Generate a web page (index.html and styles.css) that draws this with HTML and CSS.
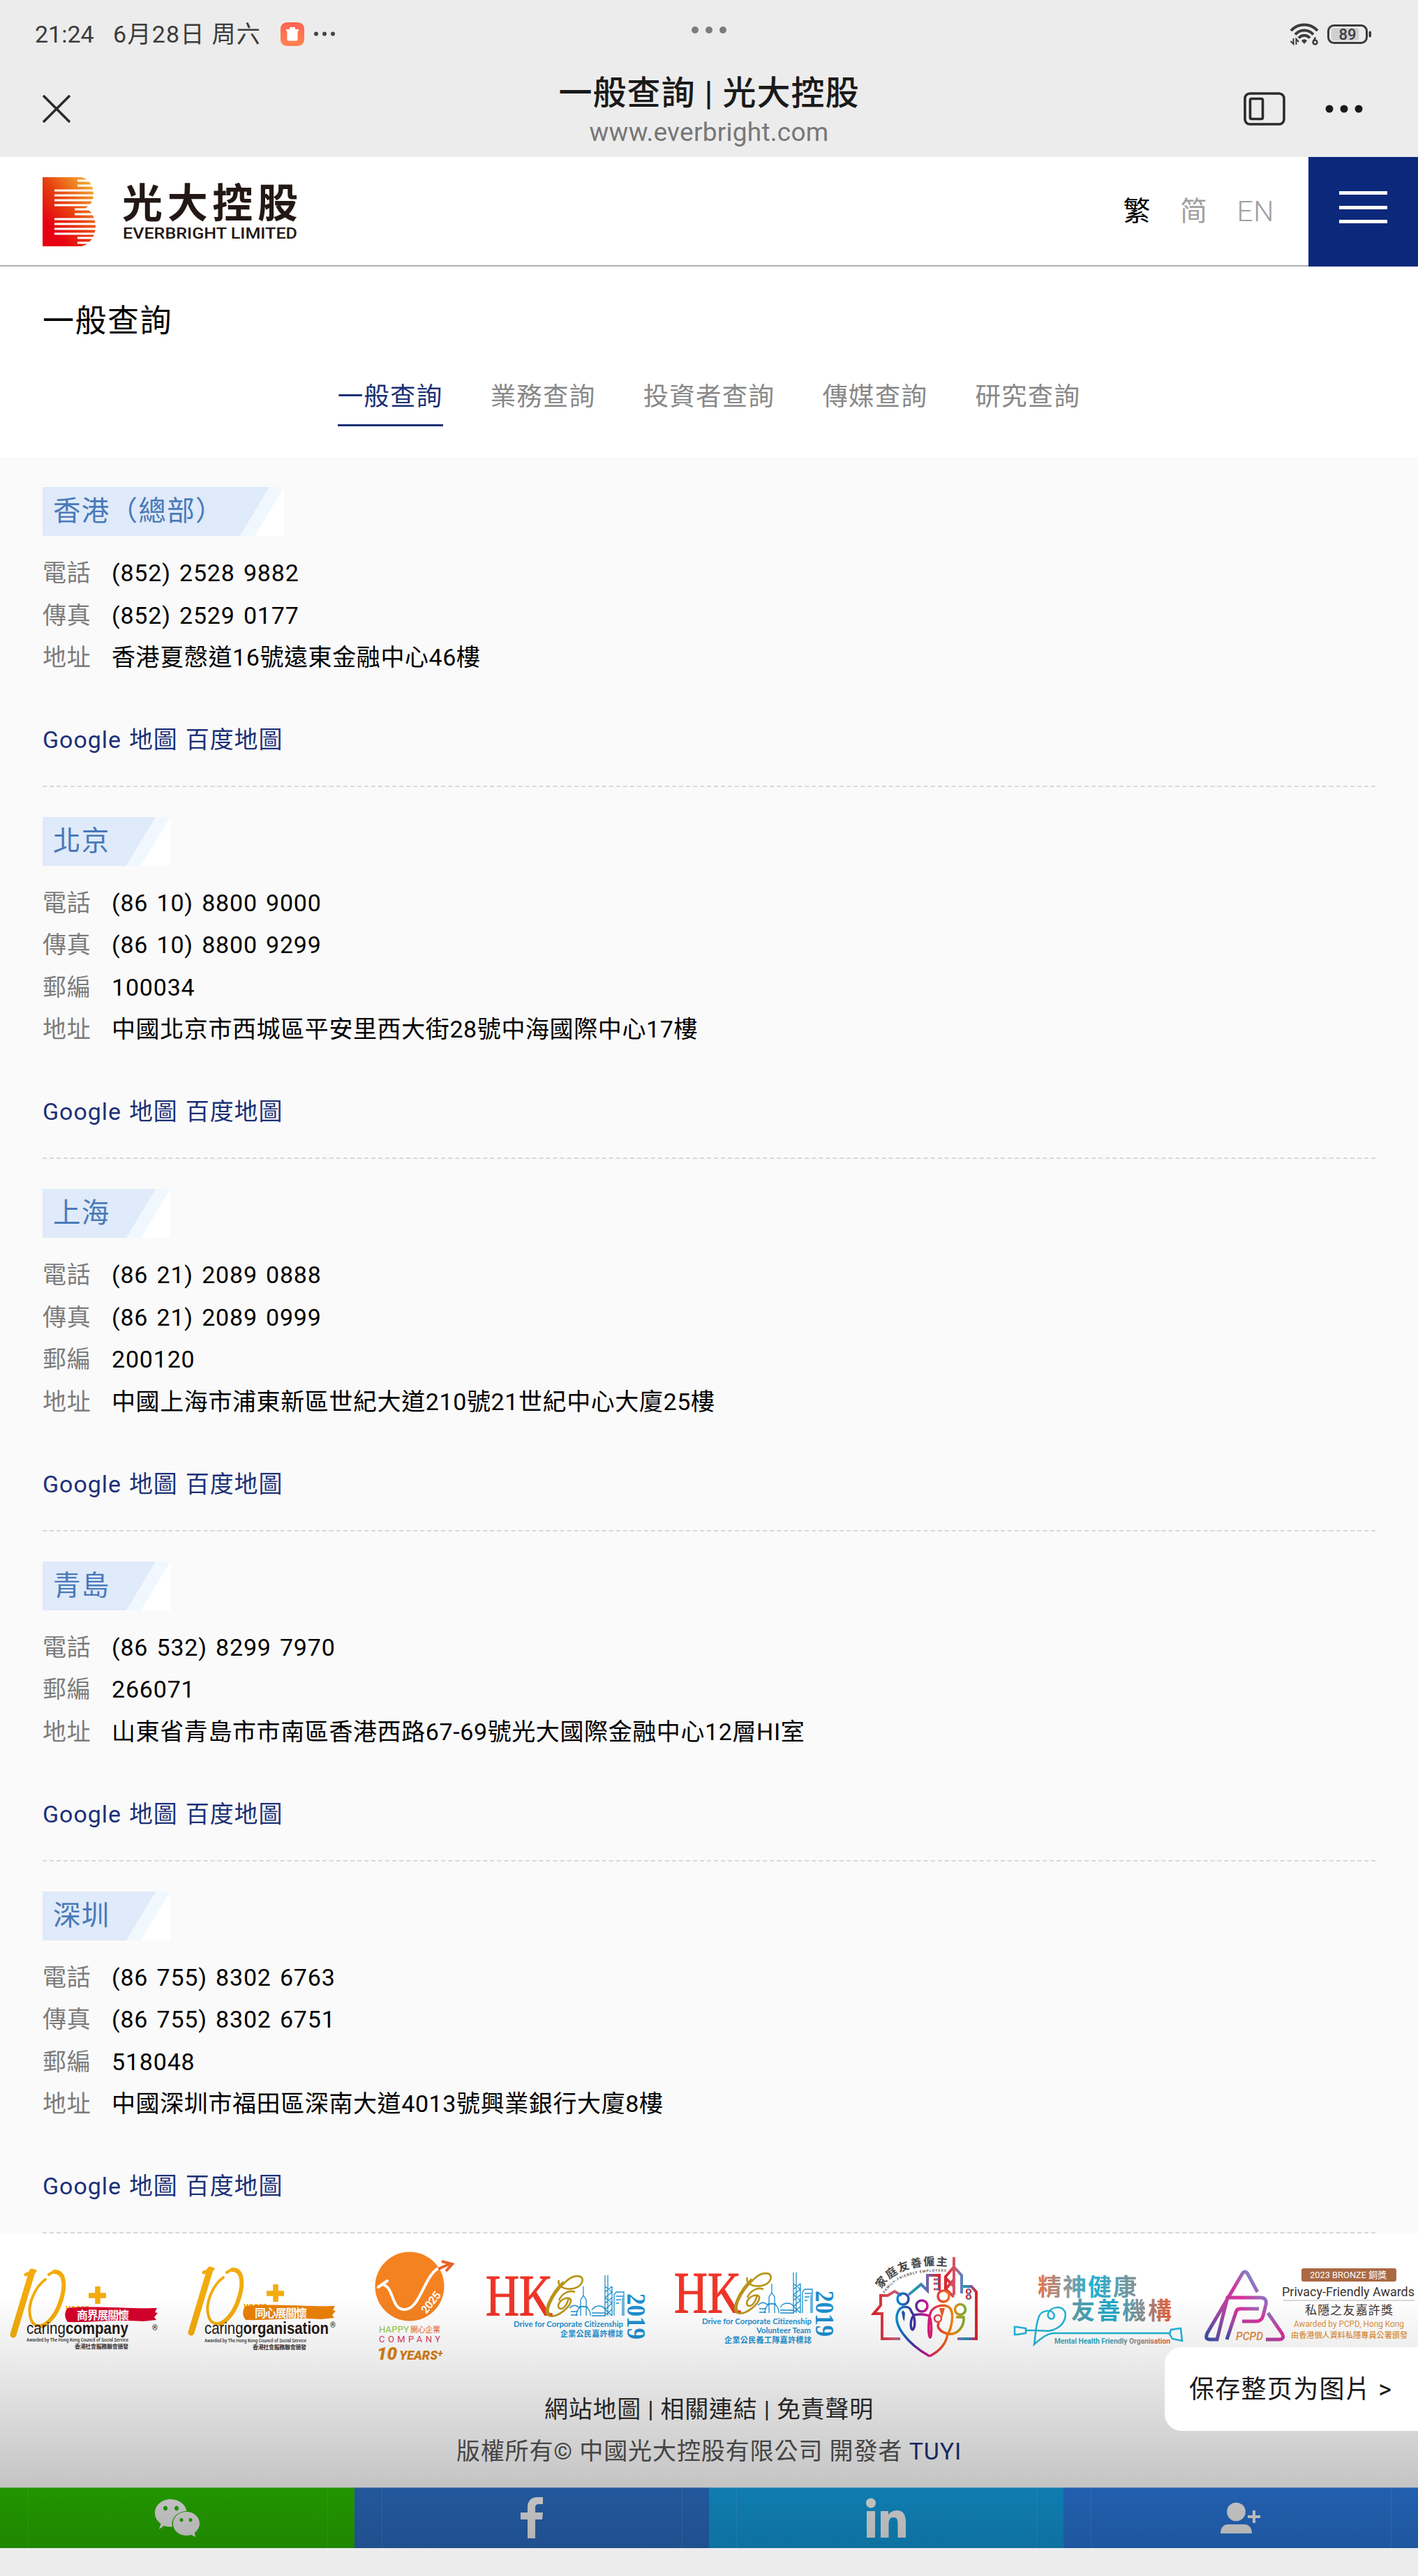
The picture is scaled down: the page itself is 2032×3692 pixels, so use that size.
FILE: index.html
```html
<!DOCTYPE html>
<html lang="zh-Hant">

<head>
    <meta charset="UTF-8" />
    <meta name="viewport" content="width=device-width, initial-scale=1.0" />
    <title>一般查詢 | 光大控股</title>
    <link rel="stylesheet" href="styles.css">
</head>

<body>
    <!-- device status bar -->
    <div class="status-bar">
        <div class="status-left">
            <span class="time">21:24</span>
            <span class="date">6月28日 周六</span>
            <svg class="app-icon" width="34" height="34" viewBox="0 0 34 34">
                <defs>
                    <linearGradient id="app" x1="0" y1="0" x2="0" y2="1">
                        <stop offset="0" stop-color="#ff6352" />
                        <stop offset="1" stop-color="#ff8450" />
                    </linearGradient>
                </defs>
                <rect width="34" height="34" rx="9" fill="url(#app)" />
                <path d="M13 7h8v3h5v2.500h-1.500V24a2.500 2.500 0 0 1-2.500 2.500H12A2.500 2.500 0 0 1 9.500 24V12.500H8V10h5z" fill="#fff" />
            </svg>
            <svg width="32" height="34" viewBox="0 0 32 34" fill="#444">
                <circle cx="4" cy="16.500" r="3" />
                <circle cx="16" cy="16.500" r="3" />
                <circle cx="28" cy="16.500" r="3" />
            </svg>
        </div>
        <svg class="status-dots" width="52" height="12" viewBox="0 0 52 12" fill="#7c7c7c">
            <circle cx="6" cy="6" r="5" />
            <circle cx="26" cy="6" r="5" />
            <circle cx="46" cy="6" r="5" />
        </svg>
        <div class="status-right">
            <svg width="42" height="34" viewBox="0 0 42 34" fill="none" stroke="#3c3c3c" stroke-width="4">
                <path d="M2 12C12 .500 30 .500 40 12" />
                <path d="M8 17.500C15 9.500 27 9.500 34 17.500" />
                <path d="M13 22.500C17.500 17.500 24.500 17.500 29 22.500" />
                <path d="M21 31l-4-4.500c2-3 6-3 8 0z" fill="#3c3c3c" stroke="none" />
                <path d="M5.500 23v8l-4-4M9.500 32v-8l3.500 4" stroke-width="2" />
                <circle cx="36.500" cy="28.500" r="3" stroke-width="2.500" />
                <path d="M34 27.500l3-6" stroke-width="2.500" />
            </svg>
            <svg width="64" height="30" viewBox="0 0 64 30">
                <rect x="1.500" y="2.500" width="55" height="25" rx="8" fill="none" stroke="#3c3c3c" stroke-width="3" />
                <rect x="5.500" y="6" width="40" height="18" rx="4" fill="#cfcfcf" />
                <rect x="59.500" y="10.500" width="3.500" height="9" rx="1.700" fill="#3c3c3c" />
                <text x="29" y="23" class="battery-text" text-anchor="middle">89</text>
            </svg>
        </div>
    </div>

    <!-- browser title bar -->
    <div class="nav-bar">
        <svg class="close" width="40" height="40" viewBox="0 0 40 40" stroke="#2b2b2b" stroke-width="3.600">
            <path d="M1 1l38 38M39 1L1 39" />
        </svg>
        <div class="page-name">
            <div class="page-title">一般查詢 | 光大控股</div>
            <div class="page-url">www.everbright.com</div>
        </div>
        <div class="nav-actions">
            <svg width="60" height="48" viewBox="0 0 60 48" fill="none" stroke="#2b2b2b">
                <rect x="2" y="2" width="56" height="44" rx="7" stroke-width="3.600" />
                <rect x="9.500" y="9.500" width="18" height="29" rx="2" stroke-width="3.600" />
            </svg>
            <svg width="54" height="12" viewBox="0 0 54 12" fill="#1a1a1a">
                <circle cx="6" cy="6" r="5.500" />
                <circle cx="27" cy="6" r="5.500" />
                <circle cx="48" cy="6" r="5.500" />
            </svg>
        </div>
    </div>

    <header>
        <svg class="logo" width="370" height="100" viewBox="0 0 370 100">
            <defs>
                <linearGradient id="flame" x1="0.150" y1="0.750" x2="0.850" y2="0">
                    <stop offset="0" stop-color="#e60012" />
                    <stop offset="0.450" stop-color="#e6420f" />
                    <stop offset="1" stop-color="#f6b130" />
                </linearGradient>
            </defs>
            <path d="M0 0H56C68 3 73 14 73 24C73 33 69 40 62 44C71 49 76 60 76 70C76 84 68 96 56 99H0Z" fill="url(#flame)" />
            <path d="M50 5H76M50 12H76M17 19H76M17 26H76M17 33H76M17 40H76M46 46H76M46 53H76M17 60H76M17 67H76M17 74H76M17 81H76M50 87H76M50 94H76" stroke="#fff" stroke-width="2.900" />
            <text x="114" y="58" class="logo-cn" textLength="252" lengthAdjust="spacing">光大控股</text>
            <text x="115" y="88" class="logo-en" textLength="250" lengthAdjust="spacingAndGlyphs">EVERBRIGHT LIMITED</text>
        </svg>
        <div class="header-right">
            <nav class="lang">
                <a class="current">繁</a>
                <a>简</a>
                <a class="en">EN</a>
            </nav>
            <div class="menu">
                <span></span>
                <span></span>
                <span></span>
            </div>
        </div>
    </header>

    <section class="intro">
        <h1>一般查詢</h1>
        <nav class="tabs">
            <a class="active">一般查詢</a>
            <a>業務查詢</a>
            <a>投資者查詢</a>
            <a>傳媒查詢</a>
            <a>研究查詢</a>
        </nav>
    </section>

    <main>
        <section class="office">
            <h2>香港（總部）</h2>
            <dl>
                <dt>電話</dt><dd class="num">(852) 2528 9882</dd>
                <dt>傳真</dt><dd class="num">(852) 2529 0177</dd>
                <dt>地址</dt><dd>香港夏慤道16號遠東金融中心46樓</dd>
            </dl>
            <p class="maps"><a>Google 地圖</a> <a>百度地圖</a></p>
        </section>
        <section class="office">
            <h2>北京</h2>
            <dl>
                <dt>電話</dt><dd class="num">(86 10) 8800 9000</dd>
                <dt>傳真</dt><dd class="num">(86 10) 8800 9299</dd>
                <dt>郵編</dt><dd class="num">100034</dd>
                <dt>地址</dt><dd>中國北京市西城區平安里西大街28號中海國際中心17樓</dd>
            </dl>
            <p class="maps"><a>Google 地圖</a> <a>百度地圖</a></p>
        </section>
        <section class="office">
            <h2>上海</h2>
            <dl>
                <dt>電話</dt><dd class="num">(86 21) 2089 0888</dd>
                <dt>傳真</dt><dd class="num">(86 21) 2089 0999</dd>
                <dt>郵編</dt><dd class="num">200120</dd>
                <dt>地址</dt><dd>中國上海市浦東新區世紀大道210號21世紀中心大廈25樓</dd>
            </dl>
            <p class="maps"><a>Google 地圖</a> <a>百度地圖</a></p>
        </section>
        <section class="office">
            <h2>青島</h2>
            <dl>
                <dt>電話</dt><dd class="num">(86 532) 8299 7970</dd>
                <dt>郵編</dt><dd class="num">266071</dd>
                <dt>地址</dt><dd>山東省青島市市南區香港西路67-69號光大國際金融中心12層HI室</dd>
            </dl>
            <p class="maps"><a>Google 地圖</a> <a>百度地圖</a></p>
        </section>
        <section class="office">
            <h2>深圳</h2>
            <dl>
                <dt>電話</dt><dd class="num">(86 755) 8302 6763</dd>
                <dt>傳真</dt><dd class="num">(86 755) 8302 6751</dd>
                <dt>郵編</dt><dd class="num">518048</dd>
                <dt>地址</dt><dd>中國深圳市福田區深南大道4013號興業銀行大廈8樓</dd>
            </dl>
            <p class="maps"><a>Google 地圖</a> <a>百度地圖</a></p>
        </section>
    </main>

    <footer>
        <div class="awards">
            <!-- caring company -->
            <svg width="255" height="190" viewBox="0 0 255 190">
                <g fill="none" stroke="#f3ab0d" stroke-linecap="round">
                    <path d="M46 55L19 145" stroke-width="9" />
                    <path d="M37 59l13-5" stroke-width="5" />
                    <path d="M70 59C90 45 96 66 87 97C78 130 50 143 44 122C38 103 50 77 65 66" stroke-width="4" />
                    <path d="M78 55C94 55 94 78 86 100C80 118 68 130 60 133" stroke-width="6" />
                </g>
                <path d="M140 76v25M127 89h25" stroke="#f3ab0d" stroke-width="7.500" />
                <text x="94" y="113" class="years" textLength="34" lengthAdjust="spacingAndGlyphs">years</text>
                <path d="M97 107C130 103 180 108 225 107L222 113L226 114L221 120L224 124L205 126C160 123 130 128 97 127C92 121 92 112 97 107Z" fill="#d5002c" />
                <text x="110" y="123" class="brush-text" textLength="75">商界展關懷</text>
                <text x="218" y="139" font-size="10" class="sans">®</text>
                <text x="38" y="144" class="caring" textLength="146" lengthAdjust="spacingAndGlyphs">caring<tspan font-weight="700">company</tspan></text>
                <text x="38" y="155" class="council" textLength="146" lengthAdjust="spacingAndGlyphs">Awarded by The Hong Kong Council of Social Service</text>
                <text x="107" y="165" class="council-cn" textLength="77">香港社會服務聯會頒發</text>
            </svg>
            <!-- caring organisation -->
            <svg width="255" height="190" viewBox="0 3 255 190">
                <g fill="none" stroke="#f3ab0d" stroke-linecap="round">
                    <path d="M46 55L19 145" stroke-width="9" />
                    <path d="M37 59l13-5" stroke-width="5" />
                    <path d="M70 59C90 45 96 66 87 97C78 130 50 143 44 122C38 103 50 77 65 66" stroke-width="4" />
                    <path d="M78 55C94 55 94 78 86 100C80 118 68 130 60 133" stroke-width="6" />
                </g>
                <path d="M140 76v25M127 89h25" stroke="#f3ab0d" stroke-width="7.500" />
                <text x="94" y="113" class="years" textLength="34" lengthAdjust="spacingAndGlyphs">years</text>
                <path d="M97 107C130 103 180 108 225 107L222 113L226 114L221 120L224 124L205 126C160 123 130 128 97 127C92 121 92 112 97 107Z" fill="#ea8006" />
                <text x="110" y="123" class="brush-text" textLength="75">同心展關懷</text>
                <text x="218" y="138" font-size="10" class="sans">®</text>
                <text x="38" y="147" class="caring" textLength="178" lengthAdjust="spacingAndGlyphs">caring<tspan font-weight="700">organisation</tspan></text>
                <text x="38" y="159" class="council" textLength="146" lengthAdjust="spacingAndGlyphs">Awarded by The Hong Kong Council of Social Service</text>
                <text x="107" y="169" class="council-cn" textLength="77">香港社會服務聯會頒發</text>
            </svg>
            <!-- happy company -->
            <svg width="170" height="190" viewBox="0 0 170 190">
                <circle cx="77" cy="76" r="49.500" fill="#f58220" />
                <path d="M32 77L45 68M38 73C55 77 50 107 68 109C92 111 96 63 118 50" fill="none" stroke="#fff" stroke-width="4" stroke-linecap="round" />
                <path d="M118 51L136 43M123 40L138 44L129 54" fill="none" stroke="#e8622a" stroke-width="4" />
                <text x="101" y="116" class="happy-year" transform="rotate(-52 101 116)" textLength="35">2025</text>
                <text x="33" y="142" class="happy" fill="#8dc63f" textLength="43">HAPPY</text>
                <text x="78" y="142" class="happy-cn" textLength="43">開心企業</text>
                <text x="33" y="156" class="happy" fill="#d83a5c" textLength="88">COMPANY</text>
                <text x="30" y="181" class="happy-ten" fill="#d97f14"><tspan font-size="26">10</tspan><tspan dx="3" font-size="18">YEARS</tspan><tspan dy="-4" font-size="14">+</tspan></text>
            </svg>
            <!-- hong kong corporate citizenship -->
            <svg width="270" height="190" viewBox="0 0 270 190">
                <text x="16" y="118" class="hk" textLength="96" lengthAdjust="spacingAndGlyphs">HK</text>
                <path d="M121 67C116 80 144 85 153 72C160 60 144 57 132 68C110 86 98 110 107 118C118 122 140 104 138 95C134 88 116 98 121 107C128 112 136 96 134 92M144 84C134 80 124 88 121 96" fill="none" stroke="#b8941a" stroke-width="2.600" />
                <path d="M128 70C108 90 100 112 107 117" fill="none" stroke="#b8941a" stroke-width="5" />
                <g fill="none" stroke="#1c8fcf" stroke-width="1.300">
                    <path d="M156 76v14M152 105v-10l4-6l4 6v10M150 105h12M146 118c0-18 20-18 20 0M136 107c5-5 10-5 14 0M138 112h10M138 117h10M152 106v12M160 106v12M168 110c5-8 16-8 20 0M168 114h20M168 118h20M187 60v58M191 60v58M187 76l10 8l-10 8l10 8l-10 9l10 9M197 76v42M187 84l10-8M187 100l10-8M187 117l10-8M200 118V88l3-4h11v34M203 90h11M203 95h7M203 100h4M212 92v26" />
                </g>
                <text x="56" y="134" class="citizen" textLength="157" lengthAdjust="spacingAndGlyphs">Drive for Corporate Citizenship</text>
                <text x="123" y="148" class="citizen-cn" textLength="90">企業公民嘉許標誌</text>
                <text x="219" y="86" class="citizen-year" transform="rotate(90 219 86)" textLength="66" lengthAdjust="spacingAndGlyphs">2019</text>
            </svg>
            <!-- volunteer team -->
            <svg width="270" height="190" viewBox="0 4 270 190">
                <text x="16" y="118" class="hk" textLength="96" lengthAdjust="spacingAndGlyphs">HK</text>
                <path d="M121 67C116 80 144 85 153 72C160 60 144 57 132 68C110 86 98 110 107 118C118 122 140 104 138 95C134 88 116 98 121 107C128 112 136 96 134 92M144 84C134 80 124 88 121 96" fill="none" stroke="#b8941a" stroke-width="2.600" />
                <path d="M128 70C108 90 100 112 107 117" fill="none" stroke="#b8941a" stroke-width="5" />
                <g fill="none" stroke="#1c8fcf" stroke-width="1.300">
                    <path d="M156 76v14M152 105v-10l4-6l4 6v10M150 105h12M146 118c0-18 20-18 20 0M136 107c5-5 10-5 14 0M138 112h10M138 117h10M152 106v12M160 106v12M168 110c5-8 16-8 20 0M168 114h20M168 118h20M187 60v58M191 60v58M187 76l10 8l-10 8l10 8l-10 9l10 9M197 76v42M187 84l10-8M187 100l10-8M187 117l10-8M200 118V88l3-4h11v34M203 90h11M203 95h7M203 100h4M212 92v26" />
                </g>
                <text x="56" y="134" class="citizen" textLength="157" lengthAdjust="spacingAndGlyphs">Drive for Corporate Citizenship</text>
                <text x="134" y="147" class="citizen" textLength="78" lengthAdjust="spacingAndGlyphs">Volunteer Team</text>
                <text x="88" y="161" class="citizen-cn" textLength="125">企業公民義工隊嘉許標誌</text>
                <text x="219" y="86" class="citizen-year" transform="rotate(90 219 86)" textLength="66" lengthAdjust="spacingAndGlyphs">2019</text>
            </svg>
            <!-- family friendly employer -->
            <svg width="210" height="190" viewBox="0 0 210 190">
                <defs>
                    <linearGradient id="city" x1="0" y1="0" x2="1" y2="0">
                        <stop offset="0" stop-color="#d8232a" />
                        <stop offset="0.300" stop-color="#d2596b" />
                        <stop offset="0.500" stop-color="#6f78c0" />
                        <stop offset="0.620" stop-color="#14a0a8" />
                        <stop offset="0.780" stop-color="#5a6fc0" />
                        <stop offset="1" stop-color="#d8232a" />
                    </linearGradient>
                    <linearGradient id="family" gradientUnits="userSpaceOnUse" x1="62" y1="0" x2="164" y2="0">
                        <stop offset="0" stop-color="#0097d8" />
                        <stop offset="0.250" stop-color="#3a35a0" />
                        <stop offset="0.450" stop-color="#d5128a" />
                        <stop offset="0.650" stop-color="#e8492a" />
                        <stop offset="0.820" stop-color="#f08a10" />
                        <stop offset="1" stop-color="#6cae30" />
                    </linearGradient>
                    <path id="arc" d="M43 80C58 54 92 42 138 47" />
                    <path id="arc2" d="M48 86C62 63 90 53 138 55" />
                </defs>
                <text class="family-cn"><textPath href="#arc" textLength="106">家庭友善僱主</textPath></text>
                <text class="family-en"><textPath href="#arc2" textLength="98">FAMILY-FRIENDLY EMPLOYERS</textPath></text>
                <g fill="none" stroke="url(#city)" stroke-width="4">
                    <path d="M70 151H44V115H32L42 103V89H52L62 83L72 89M82 88L100 73L109 82V60H126V82" />
                    <path d="M126 80H118M126 72H118M126 66H118" stroke-width="3" />
                    <path d="M147 34V88M147 48L135 62V80L147 91M147 48L158 60V86M135 64L147 76M135 80L147 66M158 76H172L179 84V151H152" />
                    <circle cx="168" cy="83" r="3" stroke-width="2.500" />
                    <circle cx="168" cy="91" r="3" stroke-width="2.500" />
                </g>
                <g fill="none" stroke="url(#family)" stroke-width="3.500">
                    <circle cx="74" cy="94" r="8" />
                    <circle cx="101" cy="104" r="8" />
                    <circle cx="132" cy="90" r="8" />
                    <circle cx="156" cy="109" r="7.500" />
                    <circle cx="124" cy="122" r="5" stroke-width="2.500" />
                    <path d="M112 176C80 158 58 130 67 112C71 103 84 103 86 112C92 120 92 134 88 138C84 138 84 122 90 117C97 115 106 116 111 118C116 122 115 149 113 149C110 149 110 124 113 115C117 102 137 100 142 108C148 118 142 138 139 143" />
                    <path d="M112 176C128 168 136 158 138 144C124 140 122 132 126 128M138 144C152 146 162 134 161 120H150" />
                </g>
                <path d="M74 110l3 4l-1 12l-2-3l-2-10z" fill="#2756a8" />
                <path d="M126 107h8l-4 14z" fill="#ea5a28" />
            </svg>
            <!-- mental health friendly organisation -->
            <svg width="280" height="190" viewBox="0 0 280 190">
                <defs>
                    <linearGradient id="mental" x1="0" x2="1">
                        <stop offset="0" stop-color="#e8734a" />
                        <stop offset="0.300" stop-color="#8c9a9c" />
                        <stop offset="0.550" stop-color="#1fb1d4" />
                        <stop offset="1" stop-color="#8a8f90" />
                    </linearGradient>
                    <linearGradient id="mental2" x1="0" x2="1">
                        <stop offset="0" stop-color="#5d9aa6" />
                        <stop offset="0.400" stop-color="#1fa9c8" />
                        <stop offset="0.700" stop-color="#8a8f90" />
                        <stop offset="1" stop-color="#ec6038" />
                    </linearGradient>
                </defs>
                <text x="57" y="89" class="mental" fill="url(#mental)" textLength="142">精神健康</text>
                <text x="105" y="123" class="mental" fill="url(#mental2)" textLength="144">友善機構</text>
                <g fill="none" stroke="#22b4d6" stroke-width="2.500">
                    <path d="M40 139H53C70 140 76 141 84 136C96 130 98 118 96 112C90 102 74 106 72 115C69 124 84 126 80 115C76 108 60 110 58 122C54 132 54 146 52 159C58 154 70 142 82 143H246" />
                    <path d="M24 134h3l13 2v7l-13 2h-3z" />
                    <path d="M246 144l2-6l14-2l2 18l-14-3z" />
                </g>
                <text x="81" y="158" class="mental-en" fill="url(#mental2)" textLength="166" lengthAdjust="spacingAndGlyphs">Mental Health Friendly Organisation</text>
            </svg>
            <!-- privacy friendly awards -->
            <svg width="322" height="190" viewBox="0 0 322 190">
                <defs>
                    <linearGradient id="pcpd" x1="0" y1="1" x2="1" y2="0">
                        <stop offset="0" stop-color="#3b4fa8" />
                        <stop offset="0.300" stop-color="#a04aa5" />
                        <stop offset="0.600" stop-color="#d9309a" />
                        <stop offset="1" stop-color="#4ab4e6" />
                    </linearGradient>
                </defs>
                <g fill="none" stroke="url(#pcpd)" stroke-width="5">
                    <path d="M92 84L78 58Q74 52 70 58L20 143Q16 152 24 152H34L49 92H96Q106 92 104 102L100 118Q98 126 90 126H70" />
                    <path d="M48 152L61 113Q62 108 67 108H94M107 114L127 143Q132 152 122 152H104" />
                </g>
                <text x="61" y="153" class="pcpd" textLength="39" lengthAdjust="spacingAndGlyphs">PCPD</text>
                <rect x="155" y="50" width="136" height="19" rx="3" fill="#ab6943" />
                <text x="167" y="64" class="bronze" textLength="110" lengthAdjust="spacingAndGlyphs">2023 BRONZE 銅獎</text>
                <text x="127" y="90" class="privacy" textLength="190" lengthAdjust="spacingAndGlyphs">Privacy-Friendly Awards</text>
                <path d="M129 96h188" stroke="#ccc" stroke-width="1.500" />
                <text x="160" y="116" class="privacy-cn" textLength="126">私隱之友嘉許獎</text>
                <text x="144" y="134" class="privacy-by" textLength="158" lengthAdjust="spacingAndGlyphs">Awarded by PCPD, Hong Kong</text>
                <text x="140" y="150" class="privacy-by-cn" textLength="167">由香港個人資料私隱專員公署頒發</text>
            </svg>
        </div>
        <div class="footer-text">
            <p class="footer-links"><a>網站地圖</a> | <a>相關連結</a> | <a>免責聲明</a></p>
            <p class="copyright">版權所有© 中國光大控股有限公司 開發者 <a>TUYI</a></p>
        </div>
        <div class="social">
            <a class="wechat">
                <svg width="64" height="64" viewBox="0 0 64 64" fill="#fff">
                    <path fill-rule="evenodd" d="M22.500 5C35 5 44 13 45.500 22C33 22 22 32 25 44.500Q18 45 13 43L6 48L8.500 40C3 36 0 31 0 24.500C0 13.500 10 5 22.500 5ZM15 14.500a3 3.500 0 1 0 .100 0ZM31 14.500a3 3.500 0 1 0 .100 0Z" />
                    <path fill-rule="evenodd" d="M45 23C56 23 64 30.500 64 40C64 45 61 49.500 57 53L58 59L52 56C39 60 26 52 26 40C26 30.500 34 23 45 23ZM38 32a2.500 2.700 0 1 0 .100 0ZM51 32a2.500 2.700 0 1 0 .100 0Z" />
                </svg>
            </a>
            <a class="facebook">
                <svg width="64" height="64" viewBox="0 0 64 64" fill="#fff">
                    <path d="M26 61V34H16V24H26V17C26 7 32 2 40 2H48V12H42C38.500 12 37 14 37 17V24H48L47 34H37V61Z" />
                </svg>
            </a>
            <a class="linkedin">
                <svg width="64" height="64" viewBox="0 0 64 64" fill="#fff">
                    <circle cx="10" cy="10.500" r="7" />
                    <path d="M4 22H16V60H4ZM24 22H35V27C38 23 42 21 47 21C57 21 60 28 60 38V60H48.500V40C48.500 34 47 31 42.500 31C38 31 35.500 34 35.500 40V60H24Z" />
                </svg>
            </a>
            <a class="share">
                <svg width="64" height="64" viewBox="0 0 64 64" fill="#fff">
                    <circle cx="25.500" cy="23" r="13.300" />
                    <path d="M3 54C3 45 8 41 14 41H37C43 41 48 45 48 54ZM49 21h4v7h7v4h-7v7h-4v-7h-7v-4h7z" />
                </svg>
            </a>
        </div>
        <div class="shade"></div>
        <a class="save-page">保存整页为图片 &gt;</a>
    </footer>
    <div class="home-bar"></div>
</body>

</html>
```
FILE: styles.css
```css
* {
    margin: 0;
    padding: 0;
    box-sizing: border-box;
}

body {
    font-family: Roboto, "Noto Sans CJK TC", sans-serif;
    background: #ececec;
    color: #000;
    font-size: 34px;
    line-height: 60.5px;
    letter-spacing: 0.75px;
}

svg {
    display: block;
    letter-spacing: 0;
    flex: none;
}

/* status bar */
.status-bar {
    height: 98px;
    padding: 0 66px 0 50px;
    display: grid;
    grid-template-columns: 1fr auto 1fr;
    align-items: center;
    color: #3c3c3c;
    line-height: 50px;
}

.status-left,
.status-right {
    display: flex;
    align-items: center;
}

.time {
    width: 112px;
    letter-spacing: 0;
}

.date {
    width: 240px;
    letter-spacing: 1.3px;
    white-space: nowrap;
}

.app-icon {
    margin-right: 13px;
}

.status-dots {
    margin: -12px -16px 0 0;
}

.status-right {
    justify-content: flex-end;
    gap: 12px;
}

.battery-text {
    font-size: 22px;
    font-weight: 500;
    fill: #3c3c3c;
}

/* browser bar */
.nav-bar {
    height: 127px;
    padding: 8px 79px 0 61px;
    display: grid;
    grid-template-columns: 1fr auto 1fr;
    align-items: start;
}

.close {
    margin-top: 30px;
}

.page-name {
    text-align: center;
    margin-right: -18px;
}

.page-title {
    font-size: 48px;
    font-weight: 500;
    line-height: 56px;
    letter-spacing: 1px;
    color: #1a1a1a;
}

.page-url {
    margin-top: 3px;
    font-size: 37px;
    line-height: 50px;
    letter-spacing: 0.25px;
    color: #777;
}

.nav-actions {
    margin-top: 26px;
    display: flex;
    justify-content: flex-end;
    align-items: center;
    gap: 57px;
}

/* site header */
header {
    height: 157px;
    padding-left: 61px;
    background: #fff;
    box-shadow: inset 0 -2px #b0b0b0;
    display: flex;
    justify-content: space-between;
}

.logo {
    margin-top: 29px;
}

.logo-cn {
    font-size: 58px;
    font-weight: 700;
    fill: #231815;
}

.logo-en {
    font-size: 22px;
    font-weight: 500;
    fill: #231815;
}

.header-right {
    display: flex;
}

.lang {
    display: flex;
    align-items: center;
    gap: 42px;
    margin-right: 49px;
    font-size: 39px;
    letter-spacing: 0.5px;
    color: #a0a0a0;
}

.lang .current {
    color: #000;
}

.lang .en {
    font-size: 41px;
    font-weight: 300;
}

.menu {
    width: 157px;
    padding: 49px 44px 0 44px;
    background: #0b287b;
}

.menu span {
    display: block;
    height: 5px;
    margin-bottom: 15.5px;
    background: #fff;
}

/* title and tabs */
.intro {
    height: 273px;
    padding: 49px 61px 0;
    background: #fff;
}

h1 {
    font-size: 45px;
    font-weight: 400;
    line-height: 60px;
    letter-spacing: 1.5px;
}

.tabs {
    margin-top: 48px;
    display: flex;
    justify-content: center;
    gap: 68px;
    font-size: 36.5px;
    line-height: 60px;
    letter-spacing: 1.25px;
    color: #888;
}

.tabs a {
    padding-bottom: 9px;
    border-bottom: 3px solid transparent;
}

.tabs .active {
    color: #1c3177;
    border-color: #1c3177;
}

/* offices */
main {
    padding: 0 61px;
    background: #fafafa;
}

.office {
    padding: 43px 0 35.4px;
    border-bottom: 2px dashed #d8d8d8;
}

h2 {
    width: fit-content;
    height: 70px;
    padding: 0 86px 0 15px;
    font-size: 39.5px;
    font-weight: 400;
    line-height: 70px;
    letter-spacing: 1.3px;
    color: #4a7ab8;
    background: linear-gradient(to right, #dfeafa, #dfeafa) no-repeat left / calc(100% - 63px) 100%,
        linear-gradient(121deg, #dfeafa 0 39.500%, #f1f8fd 40.500% 59.500%, #fff 60.500%) no-repeat right / 63px 100%;
}

dl {
    margin-top: 23px;
    display: grid;
    grid-template-columns: 99px 1fr;
}

dt {
    color: #7c7c7c;
}

dd {
    letter-spacing: 0.6px;
}

.num {
    letter-spacing: 0.8px;
    word-spacing: 3px;
}

.maps {
    margin-top: 57.5px;
    letter-spacing: 0.95px;
    word-spacing: 1.5px;
}

a {
    text-decoration: none;
}

.maps a,
.copyright a {
    color: #1c3177;
}

/* footer */
footer {
    position: relative;
    background: #fff;
}

.awards {
    display: flex;
}

.footer-text {
    padding: 32px 0 21px;
    text-align: center;
}

.footer-links {
    color: #2c2c2c;
}

.copyright {
    color: #555;
    letter-spacing: 0.9px;
}

.social {
    height: 87px;
    display: grid;
    grid-template-columns: repeat(4, 1fr);
}

.social a {
    display: flex;
    align-items: center;
    justify-content: center;
    border-top: 1px solid rgba(255, 255, 255, 0.35);
    background: linear-gradient(rgba(255, 255, 255, 0.12), rgba(255, 255, 255, 0.12)) no-repeat 39px 0 / 1px 100%,
        linear-gradient(rgba(255, 255, 255, 0.12), rgba(255, 255, 255, 0.12)) no-repeat 469px 0 / 1px 100%;
}

.social .wechat {
    background-color: #2cc100;
}

.social .facebook {
    background-color: #2d72cc;
}

.social .linkedin {
    background-color: #14a2e6;
}

.social .share {
    background-color: #2c7ce4;
}

/* dark fade over the end of the page */
.shade {
    position: absolute;
    left: 0;
    right: 0;
    bottom: 0;
    height: 363px;
    background: linear-gradient(transparent, rgba(0, 0, 0, 0.305));
    pointer-events: none;
}

.save-page {
    position: absolute;
    top: 163px;
    right: 0;
    width: 363px;
    height: 120px;
    padding-left: 35px;
    border-radius: 24px 0 0 24px;
    background: #fff;
    color: #1a1a1a;
    font-family: Roboto, "Noto Sans CJK SC", sans-serif;
    font-size: 36px;
    line-height: 123px;
    letter-spacing: 1.3px;
    white-space: nowrap;
}

.home-bar {
    height: 39px;
    background: #ececec;
}

/* award logos */
.years {
    font-size: 16px;
    font-weight: 700;
    fill: #f3ab0d;
}

.brush-text {
    font-size: 16px;
    font-weight: 700;
    fill: #fff;
}

.caring {
    font-family: "Liberation Sans", sans-serif;
    font-size: 24px;
    fill: #231815;
}

.council {
    font-size: 6.5px;
    font-weight: 500;
    fill: #333;
}

.council-cn {
    font-size: 8px;
    font-weight: 700;
    fill: #333;
}

.happy {
    font-size: 13px;
}

.happy-cn {
    font-size: 11px;
    fill: #e8622a;
}

.happy-year {
    font-size: 16px;
    font-weight: 700;
    fill: #fff;
}

.happy-ten {
    font-style: italic;
    font-weight: 900;
}

.hk {
    font-family: "Liberation Serif", serif;
    font-size: 84px;
    fill: #ee3528;
    stroke: #ee3528;
    stroke-width: 1.2px;
}

.citizen {
    font-family: Lato, sans-serif;
    font-size: 12px;
    font-weight: 700;
    fill: #1c8fcf;
}

.citizen-cn {
    font-size: 11px;
    font-weight: 700;
    fill: #1c8fcf;
}

.citizen-year {
    font-family: "Liberation Serif", serif;
    font-size: 37px;
    font-weight: 700;
    fill: #1c8fcf;
}

.family-cn {
    font-size: 16px;
    font-weight: 700;
    fill: #444;
}

.family-en {
    font-size: 5px;
    font-weight: 700;
    fill: #555;
}

.mental {
    font-size: 34px;
    font-weight: 700;
}

.mental-en {
    font-size: 10.5px;
    font-weight: 700;
}

.pcpd {
    font-size: 17px;
    font-style: italic;
    font-weight: 500;
    fill: #e08a3c;
}

.bronze {
    font-size: 13px;
    fill: #fff;
}

.privacy {
    font-size: 17.5px;
    fill: #3a3230;
}

.privacy-cn {
    font-size: 17px;
    fill: #3a3230;
}

.privacy-by {
    font-size: 12.5px;
    fill: #e0913c;
}

.privacy-by-cn {
    font-size: 11px;
    font-weight: 500;
    fill: #e0913c;
}
```
